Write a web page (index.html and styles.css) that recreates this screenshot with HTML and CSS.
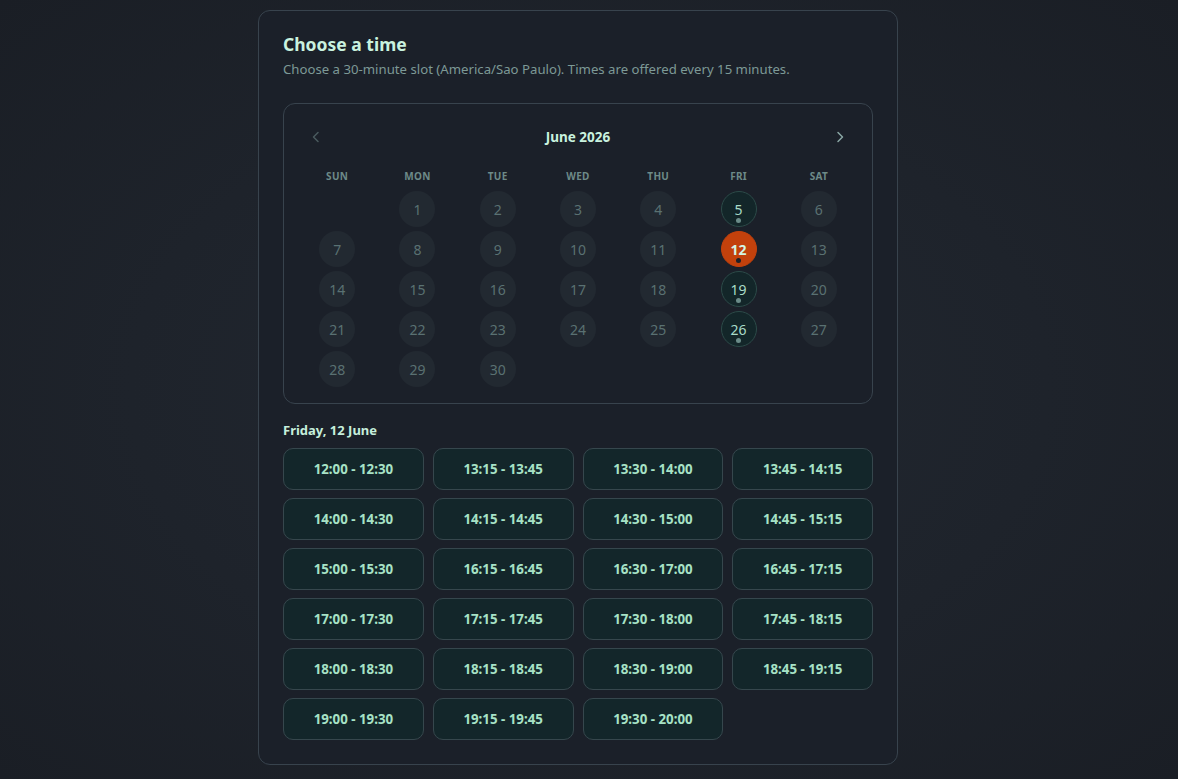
FILE: index.html
```html
<!DOCTYPE html>
<html lang="en">
<head>
  <meta charset="UTF-8">
  <meta name="viewport" content="width=device-width, initial-scale=1.0">
  <title>Choose a time</title>
  <link rel="stylesheet" href="styles.css">
</head>
<body>
  <main class="card">
    <h1 class="title">Choose a time</h1>
    <p class="subtitle">Choose a 30-minute slot (America/Sao Paulo). Times are offered every 15 minutes.</p>

    <section class="calendar">
      <div class="cal-header">
        <button class="nav-btn prev" aria-label="Previous month">
          <svg width="10" height="12" viewBox="0 0 10 12"><path d="M7 1.5L2.5 6L7 10.5" fill="none" stroke="currentColor" stroke-width="1.5" stroke-linecap="round" stroke-linejoin="round"/></svg>
        </button>
        <h2 class="month">June 2026</h2>
        <button class="nav-btn next" aria-label="Next month">
          <svg width="10" height="12" viewBox="0 0 10 12"><path d="M3 1.5L7.5 6L3 10.5" fill="none" stroke="currentColor" stroke-width="1.5" stroke-linecap="round" stroke-linejoin="round"/></svg>
        </button>
      </div>

      <div class="weekdays">
        <span>SUN</span><span>MON</span><span>TUE</span><span>WED</span><span>THU</span><span>FRI</span><span>SAT</span>
      </div>

      <div class="days" id="days"></div>
    </section>

    <h3 class="day-label">Friday, 12 June</h3>
    <div class="slots" id="slots"></div>
  </main>

  <script>
    const available = [5, 12, 19, 26];
    const selected = 12;
    const firstWeekday = 1; // June 1, 2026 is a Monday

    const daysEl = document.getElementById('days');
    for (let i = 0; i < firstWeekday; i++) {
      const blank = document.createElement('div');
      blank.className = 'day-cell';
      daysEl.appendChild(blank);
    }
    for (let d = 1; d <= 30; d++) {
      const cell = document.createElement('div');
      cell.className = 'day-cell';
      const btn = document.createElement('button');
      btn.className = 'day';
      if (available.includes(d)) btn.classList.add('available');
      if (d === selected) btn.classList.add('selected');
      btn.textContent = d;
      cell.appendChild(btn);
      daysEl.appendChild(cell);
    }

    const slots = [
      '12:00 - 12:30', '13:15 - 13:45', '13:30 - 14:00', '13:45 - 14:15',
      '14:00 - 14:30', '14:15 - 14:45', '14:30 - 15:00', '14:45 - 15:15',
      '15:00 - 15:30', '16:15 - 16:45', '16:30 - 17:00', '16:45 - 17:15',
      '17:00 - 17:30', '17:15 - 17:45', '17:30 - 18:00', '17:45 - 18:15',
      '18:00 - 18:30', '18:15 - 18:45', '18:30 - 19:00', '18:45 - 19:15',
      '19:00 - 19:30', '19:15 - 19:45', '19:30 - 20:00'
    ];
    const slotsEl = document.getElementById('slots');
    slots.forEach(s => {
      const b = document.createElement('button');
      b.className = 'slot';
      b.textContent = s;
      slotsEl.appendChild(b);
    });
  </script>
</body>
</html>
```

FILE: styles.css
```css
* {
  box-sizing: border-box;
  margin: 0;
  padding: 0;
}

body {
  font-family: "Noto Sans", "Open Sans", sans-serif;
  background: radial-gradient(ellipse at center, #222831 0%, #1e232b 55%, #1a1e25 100%);
  min-height: 100vh;
  display: flex;
  justify-content: center;
  align-items: flex-start;
  padding: 10px 22px 0 0;
  color: #c6efdc;
}

button {
  font-family: inherit;
  border: none;
  background: none;
  cursor: pointer;
}

.card {
  width: 640px;
  padding: 22px 24px 24px;
  background-color: #1b2029;
  border: 1px solid #38434d;
  border-radius: 12px;
}

.title {
  font-size: 17.5px;
  line-height: 22px;
  font-weight: 700;
  color: #c9f2df;
}

.subtitle {
  margin-top: 5px;
  font-size: 13.2px;
  line-height: 18px;
  color: #7d9996;
}

.calendar {
  margin-top: 25px;
  border: 1px solid #38434d;
  border-radius: 12px;
  padding: 16px 13px 14px;
}

.cal-header {
  display: flex;
  align-items: center;
  justify-content: space-between;
  height: 34px;
  padding: 0 8px;
}

.nav-btn {
  width: 22px;
  height: 22px;
  display: flex;
  align-items: center;
  justify-content: center;
}

.nav-btn.prev {
  color: #4a5a5e;
}

.nav-btn.next {
  color: #8aa6a4;
}

.month {
  font-size: 13.5px;
  font-weight: 700;
  color: #c9f2df;
}

.weekdays {
  margin-top: 15px;
  display: grid;
  grid-template-columns: repeat(7, 1fr);
  text-align: center;
  font-size: 10px;
  line-height: 14px;
  font-weight: 700;
  letter-spacing: 0.3px;
  color: #6d8a88;
}

.days {
  margin-top: 6px;
  display: grid;
  grid-template-columns: repeat(7, 1fr);
}

.day-cell {
  height: 40px;
  display: flex;
  align-items: center;
  justify-content: center;
}

.day {
  width: 36px;
  height: 36px;
  border-radius: 50%;
  font-size: 14px;
  color: #5a7172;
  background-color: #222931;
  background-image: radial-gradient(rgba(120, 150, 150, 0.12) 0.6px, transparent 0.7px);
  background-size: 4px 4px;
  position: relative;
  cursor: default;
}

.day.available {
  background: #132629;
  border: 1px solid #2c4a48;
  color: #a9dcc8;
  cursor: pointer;
}

.day.available::after {
  content: "";
  position: absolute;
  left: 50%;
  bottom: 3px;
  width: 5px;
  height: 5px;
  margin-left: -2.5px;
  border-radius: 50%;
  background: #6b8c89;
}

.day.selected {
  background: #c2410c;
  border-color: #c2410c;
  color: #d4f5e4;
  font-weight: 700;
}

.day.selected::after {
  background: #1b2029;
}

.day-label {
  margin-top: 17px;
  font-size: 13px;
  line-height: 18px;
  font-weight: 700;
  color: #c6efdc;
}

.slots {
  margin-top: 9px;
  display: grid;
  grid-template-columns: repeat(4, 1fr);
  column-gap: 9px;
  row-gap: 8px;
}

.slot {
  height: 42px;
  border: 1px solid #36474d;
  border-radius: 10px;
  background-color: #13262a;
  color: #a7e2c6;
  font-size: 13.3px;
  font-weight: 700;
}
```
